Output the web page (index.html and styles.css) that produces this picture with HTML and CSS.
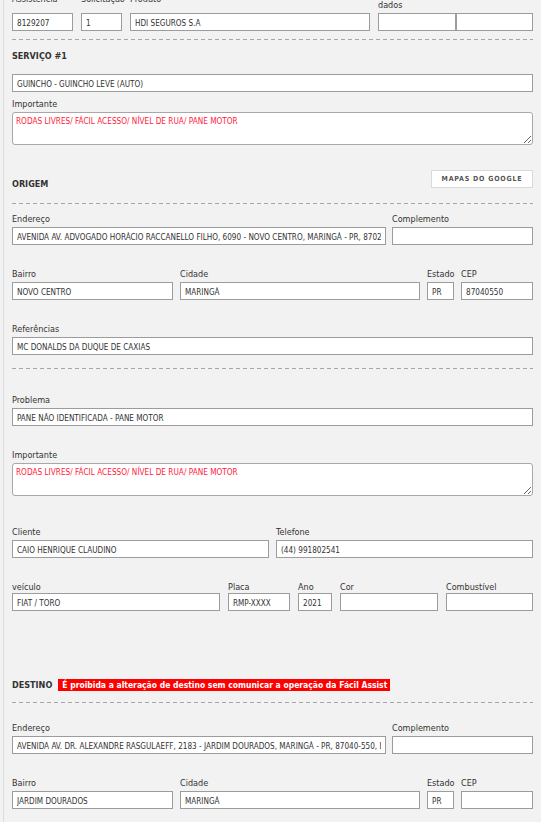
FILE: index.html
```html
<!DOCTYPE html>
<html lang="pt-BR">
<head>
<meta charset="utf-8">
<title>Serviço</title>
<link rel="stylesheet" href="styles.css">
</head>
<body>
<div class="page">
  <div class="hdr">
    <div class="cell">
      <label class="lbl lbl-raised">Assistência</label>
      <input class="inp" type="text" value="8129207">
    </div>
    <div class="cell">
      <label class="lbl lbl-raised">Solicitação</label>
      <input class="inp" type="text" value="1">
    </div>
    <div class="cell">
      <label class="lbl lbl-raised">Produto</label>
      <input class="inp" type="text" value="HDI SEGUROS S.A">
    </div>
    <div class="cell">
      <label class="lbl">Conferência de<br>dados</label>
      <div class="pair">
        <input class="inp" type="text" value="">
        <input class="inp" type="text" value="">
      </div>
    </div>
  </div>

  <div class="dash d1"></div>

  <div class="title t-serv">SERVIÇO #1</div>
  <div class="row r-guincho"><input class="inp" type="text" value="GUINCHO - GUINCHO LEVE (AUTO)"></div>

  <div class="row r-imp1">
    <div class="cell">
      <label class="lbl">Importante</label>
      <textarea class="ta">RODAS LIVRES/ FÁCIL ACESSO/ NÍVEL DE RUA/ PANE MOTOR</textarea>
    </div>
  </div>

  <div class="title-row r-origem">
    <div class="title t-flush">ORIGEM</div>
    <button class="btn" type="button">MAPAS DO GOOGLE</button>
  </div>

  <div class="dash d2"></div>

  <div class="row g-addr r-end1">
    <div class="cell"><label class="lbl">Endereço</label><input class="inp" type="text" value="AVENIDA AV. ADVOGADO HORÁCIO RACCANELLO FILHO, 6090 - NOVO CENTRO, MARINGÁ - PR, 87020-025, BRASIL"></div>
    <div class="cell"><label class="lbl">Complemento</label><input class="inp" type="text" value=""></div>
  </div>

  <div class="row g-bairro gap23">
    <div class="cell"><label class="lbl">Bairro</label><input class="inp" type="text" value="NOVO CENTRO"></div>
    <div class="cell"><label class="lbl">Cidade</label><input class="inp" type="text" value="MARINGÁ"></div>
    <div class="cell"><label class="lbl">Estado</label><input class="inp" type="text" value="PR"></div>
    <div class="cell"><label class="lbl">CEP</label><input class="inp" type="text" value="87040550"></div>
  </div>

  <div class="row gap23">
    <div class="cell"><label class="lbl">Referências</label><input class="inp" type="text" value="MC DONALDS DA DUQUE DE CAXIAS"></div>
  </div>

  <div class="dash d3"></div>

  <div class="row r-prob">
    <div class="cell"><label class="lbl">Problema</label><input class="inp" type="text" value="PANE NÃO IDENTIFICADA - PANE MOTOR"></div>
  </div>

  <div class="row gap23">
    <div class="cell">
      <label class="lbl">Importante</label>
      <textarea class="ta">RODAS LIVRES/ FÁCIL ACESSO/ NÍVEL DE RUA/ PANE MOTOR</textarea>
    </div>
  </div>

  <div class="row g-cli r-cli">
    <div class="cell"><label class="lbl">Cliente</label><input class="inp" type="text" value="CAIO HENRIQUE CLAUDINO"></div>
    <div class="cell"><label class="lbl">Telefone</label><input class="inp" type="text" value="(44) 991802541"></div>
  </div>

  <div class="row g-veic r-veic">
    <div class="cell"><label class="lbl lbl-tight">veículo</label><input class="inp" type="text" value="FIAT / TORO"></div>
    <div class="cell"><label class="lbl lbl-tight">Placa</label><input class="inp" type="text" value="RMP-XXXX"></div>
    <div class="cell"><label class="lbl lbl-tight">Ano</label><input class="inp" type="text" value="2021"></div>
    <div class="cell"><label class="lbl lbl-tight">Cor</label><input class="inp" type="text" value=""></div>
    <div class="cell"><label class="lbl lbl-tight">Combustível</label><input class="inp" type="text" value=""></div>
  </div>

  <div class="title-row2 r-dest">
    <div class="title">DESTINO</div>
    <span class="warn">É proibida a alteração de destino sem comunicar a operação da Fácil Assist</span>
  </div>

  <div class="dash d4"></div>

  <div class="row g-addr r-end2">
    <div class="cell"><label class="lbl">Endereço</label><input class="inp" type="text" value="AVENIDA AV. DR. ALEXANDRE RASGULAEFF, 2183 - JARDIM DOURADOS, MARINGÁ - PR, 87040-550, BRASIL"></div>
    <div class="cell"><label class="lbl">Complemento</label><input class="inp" type="text" value=""></div>
  </div>

  <div class="row g-bairro gap23">
    <div class="cell"><label class="lbl">Bairro</label><input class="inp" type="text" value="JARDIM DOURADOS"></div>
    <div class="cell"><label class="lbl">Cidade</label><input class="inp" type="text" value="MARINGÁ"></div>
    <div class="cell"><label class="lbl">Estado</label><input class="inp" type="text" value="PR"></div>
    <div class="cell"><label class="lbl">CEP</label><input class="inp" type="text" value=""></div>
  </div>

  <div class="row gap23">
    <div class="cell"><label class="lbl">Referências</label><input class="inp" type="text" value=""></div>
  </div>
</div>
</body>
</html>
```
FILE: styles.css
```css
html, body {
  margin: 0;
  padding: 0;
  background: #f2f2f2;
}
body {
  font-family: "DejaVu Sans Condensed", "Liberation Sans", sans-serif;
  color: #333;
  overflow: hidden;
}
.page {
  margin-left: 3px;
  border-left: 1px solid #dcdcdc;
  padding: 0 8px 60px 8px;
  min-height: 900px;
}
.hdr {
  margin-top: -13px;
  display: grid;
  grid-template-columns: 61px 41px 240px 155px;
  column-gap: 8px;
}
.hdr .cell {
  display: flex;
  flex-direction: column;
  justify-content: flex-end;
}
.pair {
  display: flex;
}
.pair .inp {
  width: 78px;
}
.pair .inp + .inp {
  width: 77px;
}
.cell {
  display: flex;
  flex-direction: column;
  min-width: 0;
}
.lbl {
  display: block;
  font-size: 9px;
  line-height: 12px;
  margin-bottom: 2px;
  color: #333;
  white-space: nowrap;
}
.lbl-raised {
  margin-bottom: 8px;
}
.lbl-tight {
  margin-bottom: 0;
}
.inp {
  box-sizing: border-box;
  display: block;
  width: 100%;
  height: 18px;
  margin: 0;
  padding: 2px 4px 0 4px;
  border: 1px solid #9c9c9c;
  border-radius: 0;
  background: #fff;
  font-family: "DejaVu Sans Condensed", "Liberation Sans", sans-serif;
  font-size: 8.1px;
  color: #333;
  outline: none;
}
.ta {
  box-sizing: border-box;
  display: block;
  width: 100%;
  height: 33px;
  margin: 0;
  padding: 3px 3px;
  border: 1px solid #a8a8a8;
  border-radius: 3px;
  background: #fff;
  font-family: "DejaVu Sans Condensed", "Liberation Sans", sans-serif;
  font-size: 8.2px;
  line-height: 10px;
  color: #ff1a3c;
  outline: none;
}
.dash {
  height: 1px;
  background: repeating-linear-gradient(to right, #a6a6a6 0 4px, transparent 4px 7px);
}
.d1 { margin-top: 8px; }
.d2 { margin-top: 15px; }
.d3 { margin-top: 13px; }
.d4 { margin-top: 11px; }

.title {
  font-size: 9px;
  font-weight: bold;
  line-height: 12px;
  color: #333;
}
.t-serv { margin-top: 10px; }
.row { display: grid; grid-template-columns: 1fr; }
.r-guincho { margin-top: 12px; }
.r-imp1 { margin-top: 6px; }
.gap23 { margin-top: 23px; }
.r-end1 { margin-top: 9px; }
.r-prob { margin-top: 25px; }
.r-cli { margin-top: 30px; }
.r-veic { margin-top: 23px; }
.r-end2 { margin-top: 19px; }

.g-addr {
  grid-template-columns: 374px 141px;
  column-gap: 6px;
}
.g-bairro {
  grid-template-columns: 161px 240px 27px 72px;
  column-gap: 7px;
}
.g-cli {
  grid-template-columns: 257px 257px;
  column-gap: 7px;
}
.g-veic {
  grid-template-columns: 208px 62px 34px 98px 87px;
  column-gap: 8px;
}

.title-row {
  display: flex;
  justify-content: space-between;
  align-items: flex-end;
}
.r-origem { margin-top: 25px; }
.t-flush { margin-bottom: -2px; }
.btn {
  box-sizing: border-box;
  width: 102px;
  height: 18px;
  margin: 0;
  padding: 0;
  background: #fff;
  border: 1px solid #dadada;
  border-radius: 0;
  font-family: "DejaVu Sans Condensed", "Liberation Sans", sans-serif;
  font-size: 7px;
  font-weight: bold;
  letter-spacing: 0.8px;
  color: #555;
}
.title-row2 {
  display: flex;
  align-items: center;
  gap: 6px;
}
.r-dest { margin-top: 68px; }
.warn {
  display: inline-block;
  background: #ff0000;
  color: #fff;
  font-size: 8.5px;
  font-weight: bold;
  line-height: 12px;
  padding: 0 3px 0 4px;
  white-space: nowrap;
}
```
